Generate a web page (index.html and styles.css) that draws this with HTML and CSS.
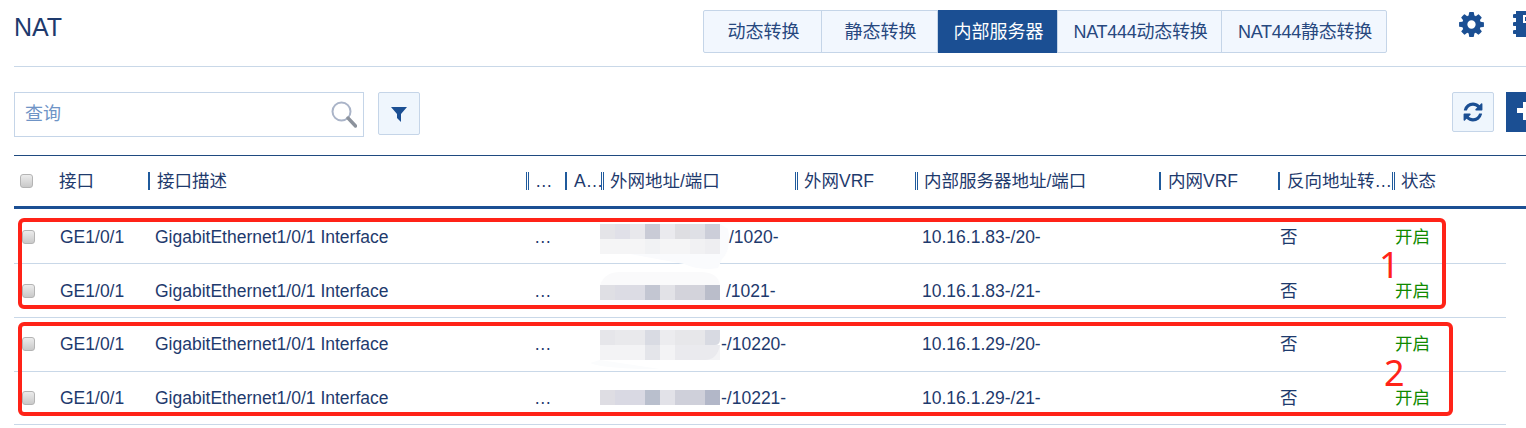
FILE: index.html
```html
<!DOCTYPE html>
<html lang="zh-CN">

<head>
    <meta charset="UTF-8">
    <meta name="viewport" content="width=device-width, initial-scale=1.0">
    <title>NAT</title>
    <link rel="stylesheet" href="styles.css">
</head>

<body>
    <div class="page">
        <div class="top-bar">
            <h1 class="title">NAT</h1>
            <div class="tabs">
                <div class="tab tab-first">动态转换</div>
                <div class="tab tab-second">静态转换</div>
                <div class="tab tab-active">内部服务器</div>
                <div class="tab tab-fourth">NAT444动态转换</div>
                <div class="tab tab-fifth">NAT444静态转换</div>
            </div>
            <svg class="gear" viewBox="0 0 1792 1792">
                <path d="M1152 896q0-106-75-181t-181-75-181 75-75 181 75 181 181 75 181-75 75-181zm512-109v222q0 12-8 23t-20 13l-185 28q-19 54-39 91 35 50 107 138 10 12 10 25t-9 23q-27 37-99 108t-94 71q-12 0-26-9l-138-108q-44 23-91 38-16 136-29 186-7 28-36 28h-222q-14 0-24.5-8.5t-11.5-21.5l-28-184q-49-16-90-37l-141 107q-10 9-25 9-14 0-25-11-126-114-165-168-7-10-7-23 0-12 8-23 15-21 51-66.5t54-70.5q-27-50-41-99l-183-27q-13-2-21-12.5t-8-23.5v-222q0-12 8-23t19-13l186-28q14-46 39-92-40-57-107-138-10-12-10-24 0-10 9-23 26-36 98.5-107.5t94.5-71.5q13 0 26 10l138 107q44-23 91-38 16-136 29-186 7-28 36-28h222q14 0 24.5 8.5t11.5 21.5l28 184q49 16 90 37l142-107q9-9 24-9 13 0 25 10 129 119 165 170 7 8 7 22 0 12-8 23-15 21-51 66.5t-54 70.5q26 50 41 98l183 28q13 2 21 12.5t8 23.5z" />
            </svg>
            <svg class="chip" viewBox="0 0 26 26">
                <path d="M3 0h23v26H3v-3H1.5a2 2 0 0 1 0-4H3v-4H1.5a2 2 0 0 1 0-4H3V7H1.5a2 2 0 0 1 0-4H3z" />
                <rect x="10" y="4" width="7" height="8" fill="#fff" />
                <rect x="12" y="6" width="3" height="4" />
            </svg>
        </div>

        <div class="toolbar">
            <div class="search">
                <span class="search-text">查询</span>
                <svg class="search-icon" viewBox="0 0 26 27">
                    <circle cx="10.5" cy="10.5" r="9" fill="#fff" stroke="#aab4c8" stroke-width="2" />
                    <path d="M17 17l7.5 8" stroke="#8c929c" stroke-width="3.4" stroke-linecap="round" />
                </svg>
            </div>
            <button class="tool-btn filter-btn">
                <svg viewBox="0 0 16 16" width="16" height="16">
                    <path d="M0 1h16L10 8v8L6 12V8z" fill="#1b4f93" />
                </svg>
            </button>
            <button class="tool-btn refresh-btn">
                <svg viewBox="0 0 1792 1792" width="22" height="22">
                    <path fill="#1b4f93" d="M1639 1056q0 5-1 7-64 268-268 434.5t-478 166.5q-146 0-282.5-55t-243.5-157l-129 129q-19 19-45 19t-45-19-19-45v-448q0-26 19-45t45-19h448q26 0 45 19t19 45-19 45l-137 137q71 66 161 102t187 36q134 0 250-65t186-179q11-17 53-117 8-23 30-23h192q13 0 22.5 9.5t9.5 22.5zm25-800v448q0 26-19 45t-45 19h-448q-26 0-45-19t-19-45 19-45l138-138q-148-137-349-137-134 0-250 65t-186 179q-11 17-53 117-8 23-30 23h-199q-13 0-22.5-9.5t-9.5-22.5v-7q65-268 270-434.5t480-166.5q146 0 284 55.5t245 156.5l130-129q19-19 45-19t45 19 19 45z" />
                </svg>
            </button>
            <div class="add-btn"><span class="plus"></span></div>
        </div>

        <div class="table-head">
            <div class="th-check"><span class="check"></span></div>
            <div class="th-first">接口</div>
            <div><span class="th">接口描述</span></div>
            <div><span class="th th-double">…</span></div>
            <div><span class="th">A…</span></div>
            <div><span class="th th-double">外网地址/端口</span></div>
            <div><span class="th th-double">外网VRF</span></div>
            <div><span class="th th-double">内部服务器地址/端口</span></div>
            <div><span class="th">内网VRF</span></div>
            <div><span class="th">反向地址转…</span></div>
            <div><span class="th th-double">状态</span></div>
        </div>

        <div class="table-body">
            <div class="row">
                <div class="check-cell"><span class="check"></span></div>
                <div>GE1/0/1</div>
                <div>GigabitEthernet1/0/1 Interface</div>
                <div>…</div>
                <div class="addr">
                    <svg class="mosaic mosaic-first" viewBox="0 0 120 30" width="120" height="30">
                        <path d="M120 0l8 5q4 20-6 30l-4 9q-18 3-34-4L30 30h90z" fill="#fafbfd" />
                        <rect width="15" height="15" fill="#e4e4e8" /><rect x="15" width="15" height="15" fill="#e0e0e8" /><rect x="30" width="15" height="15" fill="#e8e8ec" /><rect x="45" width="15" height="15" fill="#c9cbd6" /><rect x="60" width="15" height="15" fill="#eaeaee" /><rect x="75" width="15" height="15" fill="#dedee2" /><rect x="90" width="15" height="15" fill="#dfe0e6" /><rect x="105" width="15" height="15" fill="#ccced9" />
                        <rect y="15" width="120" height="15" fill="#f5f5f6" /><rect x="45" y="15" width="15" height="15" fill="#f1f2f4" /><rect x="90" y="15" width="15" height="15" fill="#f1f1f3" /><rect x="105" y="15" width="15" height="15" fill="#eeeef1" />
                    </svg>
                    <span class="addr-text addr-a">/1020-</span>
                </div>
                <div>10.16.1.83-/20-</div>
                <div>否</div>
                <div class="on">开启</div>
            </div>
            <div class="row">
                <div class="check-cell"><span class="check"></span></div>
                <div>GE1/0/1</div>
                <div>GigabitEthernet1/0/1 Interface</div>
                <div>…</div>
                <div class="addr">
                    <svg class="mosaic mosaic-second" viewBox="0 0 120 15" width="120" height="15">
                        <path d="M0 0q5-13 20-13h80q18 0 20 13z" fill="#fafafb" />
                        <rect width="15" height="15" fill="#dfdfe4" /><rect x="15" width="30" height="15" fill="#dcdce4" /><rect x="45" width="15" height="15" fill="#c3c6d2" /><rect x="60" width="15" height="15" fill="#e2e2e7" /><rect x="75" width="30" height="15" fill="#d3d3db" /><rect x="105" width="15" height="15" fill="#babdca" />
                    </svg>
                    <span class="addr-text addr-b">/1021-</span>
                </div>
                <div>10.16.1.83-/21-</div>
                <div>否</div>
                <div class="on">开启</div>
            </div>
            <div class="row">
                <div class="check-cell"><span class="check"></span></div>
                <div>GE1/0/1</div>
                <div>GigabitEthernet1/0/1 Interface</div>
                <div>…</div>
                <div class="addr">
                    <svg class="mosaic mosaic-third" viewBox="0 0 120 30" width="120" height="30">
                        <path d="M0 30l-10 3q15 6 70 6z" fill="#fbfcfd" />
                        <rect width="15" height="15" fill="#e6e6ea" /><rect x="15" width="30" height="15" fill="#e9e9ec" /><rect x="45" width="15" height="15" fill="#d9dbe3" /><rect x="60" width="15" height="15" fill="#ececef" /><rect x="75" width="30" height="15" fill="#e7e7ea" /><path d="M105 0h15v9q0 6-5 6h-10z" fill="#d8dae2" />
                        <rect y="15" width="120" height="15" fill="#f3f3f5" /><rect x="45" y="15" width="15" height="15" fill="#e4e5ea" /><path d="M75 15h45q-3 15-15 15H75z" fill="#eaeaee" />
                    </svg>
                    <span class="addr-text">-/10220-</span>
                </div>
                <div>10.16.1.29-/20-</div>
                <div>否</div>
                <div class="on">开启</div>
            </div>
            <div class="row">
                <div class="check-cell"><span class="check"></span></div>
                <div>GE1/0/1</div>
                <div>GigabitEthernet1/0/1 Interface</div>
                <div>…</div>
                <div class="addr">
                    <svg class="mosaic" viewBox="0 0 120 15" width="120" height="15">
                        <rect width="15" height="15" fill="#dedde3" /><rect x="15" width="30" height="15" fill="#d9d9e3" /><rect x="45" width="15" height="15" fill="#b9bfcd" /><rect x="60" width="15" height="15" fill="#e2e2e8" /><rect x="75" width="30" height="15" fill="#cfd0da" /><rect x="105" width="15" height="15" fill="#b2b7c8" />
                    </svg>
                    <span class="addr-text">-/10221-</span>
                </div>
                <div>10.16.1.29-/21-</div>
                <div>否</div>
                <div class="on">开启</div>
            </div>
        </div>

        <!-- red marks drawn on top of the table -->
        <div class="mark mark-one"></div>
        <div class="mark mark-two"></div>
        <div class="mark-num mark-num-one">1</div>
        <div class="mark-num mark-num-two">2</div>
    </div>
</body>

</html>
```

FILE: styles.css
```css
* {
    box-sizing: border-box;
}

html,
body {
    margin: 0;
    height: 428px;
    overflow: hidden;
    background-color: #ffffff;
}

body {
    font-family: "Liberation Sans", "Noto Sans CJK SC", Arial, sans-serif;
    color: #1e3a6d;
}

.page {
    position: relative;
    width: 1526px;
    height: 428px;
    padding-left: 14px;
    overflow: hidden;
}

/* top bar */
.top-bar {
    display: flex;
    align-items: flex-start;
    height: 67px;
    padding-top: 10px;
    border-bottom: 1px solid #c9d8e8;
}

.title {
    width: 689px;
    flex-shrink: 0;
    margin: 0;
    font-size: 25px;
    font-weight: normal;
    line-height: 34px;
}

.tabs {
    display: flex;
    height: 43px;
    flex-shrink: 0;
    border: 1px solid #c5d5e8;
    border-radius: 2px;
    background-color: #f2f7fe;
}

.tab {
    display: flex;
    align-items: center;
    justify-content: center;
    padding: 0 0 4px 2px;
    font-size: 18px;
    color: #27487f;
    border-right: 1px solid #c5d5e8;
}

.tab-first {
    width: 118px;
}

.tab-second {
    width: 116px;
}

.tab-active {
    width: 120px;
    margin: -1px 0;
    background-color: #1b4f93;
    color: #ffffff;
}

.tab-fourth {
    width: 164px;
    letter-spacing: -0.25px;
}

.tab-fifth {
    width: 164px;
    letter-spacing: -0.25px;
    border-right: 0;
}

.gear {
    width: 29px;
    height: 29px;
    margin: 0 0 0 70px;
    flex-shrink: 0;
    fill: #1b4f93;
}

.chip {
    width: 26px;
    height: 26px;
    margin: 1px 0 0 27px;
    flex-shrink: 0;
    fill: #1b4f93;
}

/* search row */
.toolbar {
    display: flex;
    align-items: flex-start;
    margin-top: 25px;
    height: 63px;
}

.search {
    display: flex;
    align-items: center;
    justify-content: space-between;
    width: 350px;
    height: 45px;
    padding: 0 6px 0 10px;
    border: 1px solid #c5d5e8;
}

.search-text {
    margin-top: -5px;
    font-size: 18px;
    color: #6f94c6;
}

.search-icon {
    width: 26px;
    height: 27px;
    fill: none;
    margin-top: -1px;
}

.tool-btn {
    display: flex;
    align-items: center;
    justify-content: center;
    width: 42px;
    padding: 0;
    border: 1px solid #c5d5e8;
    border-radius: 2px;
    background-color: #eff6fd;
}

.filter-btn {
    height: 43px;
    margin-left: 14px;
}

.refresh-btn {
    height: 40px;
    margin-left: auto;
}

.add-btn {
    position: relative;
    width: 40px;
    height: 40px;
    margin: 0 -20px 0 12px;
    background-color: #1b4f93;
}

/* the plus is cut off by the window edge */
.plus {
    display: block;
    position: absolute;
    left: 11px;
    top: 16px;
    width: 20px;
    height: 5px;
    background-color: #ffffff;
}

.plus::after {
    content: "";
    position: absolute;
    left: 6px;
    top: -6px;
    width: 6px;
    height: 18px;
    background-color: #ffffff;
}

/* table */
.table-head {
    display: grid;
    grid-template-columns: 46px 88px 378px 39px 36px 194px 120px 244px 119px 114px 114px;
    align-items: center;
    height: 54px;
    padding-bottom: 1px;
    border-top: 1px solid #1f4a80;
    border-bottom: 3px solid #1b4f93;
    font-size: 17.5px;
    line-height: 18px;
    white-space: nowrap;
}

.th-check {
    padding-left: 6px;
    display: flex;
}

.th-first {
    margin-left: -1px;
}

.th {
    display: inline-block;
    padding-left: 7px;
    line-height: 18px;
    border-left: 2px solid #1f5a9c;
}

.th-double {
    padding-left: 6px;
    border-left: 3px double #1f5a9c;
}

.table-body {
    width: 1492px;
    margin-top: 1.67px;
}

.row {
    display: grid;
    grid-template-columns: 46px 95px 379px 66px 322px 358px 115px 111px;
    align-items: center;
    height: 53.67px;
    border-bottom: 1px solid #c9d8e8;
    font-size: 17.5px;
    line-height: 20px;
    white-space: nowrap;
}

.check-cell {
    display: flex;
    padding-left: 8px;
}

.check {
    display: block;
    width: 13px;
    height: 14px;
    border: 1px solid #b4b4b4;
    border-radius: 3px;
    background: linear-gradient(#ececec, #c9c9c9);
}

.addr {
    display: flex;
    align-items: center;
    height: 100%;
}

.mosaic {
    flex-shrink: 0;
    overflow: visible;
}

.mosaic-first {
    margin-top: 5px;
}

.mosaic-second {
    margin-top: 3px;
}

.mosaic-third {
    margin-top: 1px;
}

.addr-text {
    margin-left: 1px;
}

.addr-a {
    margin-left: 9px;
}

.addr-b {
    margin-left: 6px;
}

.on {
    color: #0f8a00;
}

/* red annotations */
.mark {
    position: absolute;
    border: 4px solid #ff2318;
    border-radius: 6px;
}

.mark-one {
    left: 18px;
    top: 218px;
    width: 1428px;
    height: 91px;
}

.mark-two {
    left: 18px;
    top: 322px;
    width: 1435px;
    height: 94px;
}

.mark-num {
    position: absolute;
    font-family: "Noto Sans", sans-serif;
    font-size: 36px;
    line-height: 36px;
    color: #ff2318;
}

.mark-num-one {
    left: 1379px;
    top: 247px;
}

.mark-num-two {
    left: 1384px;
    top: 355px;
}
```
